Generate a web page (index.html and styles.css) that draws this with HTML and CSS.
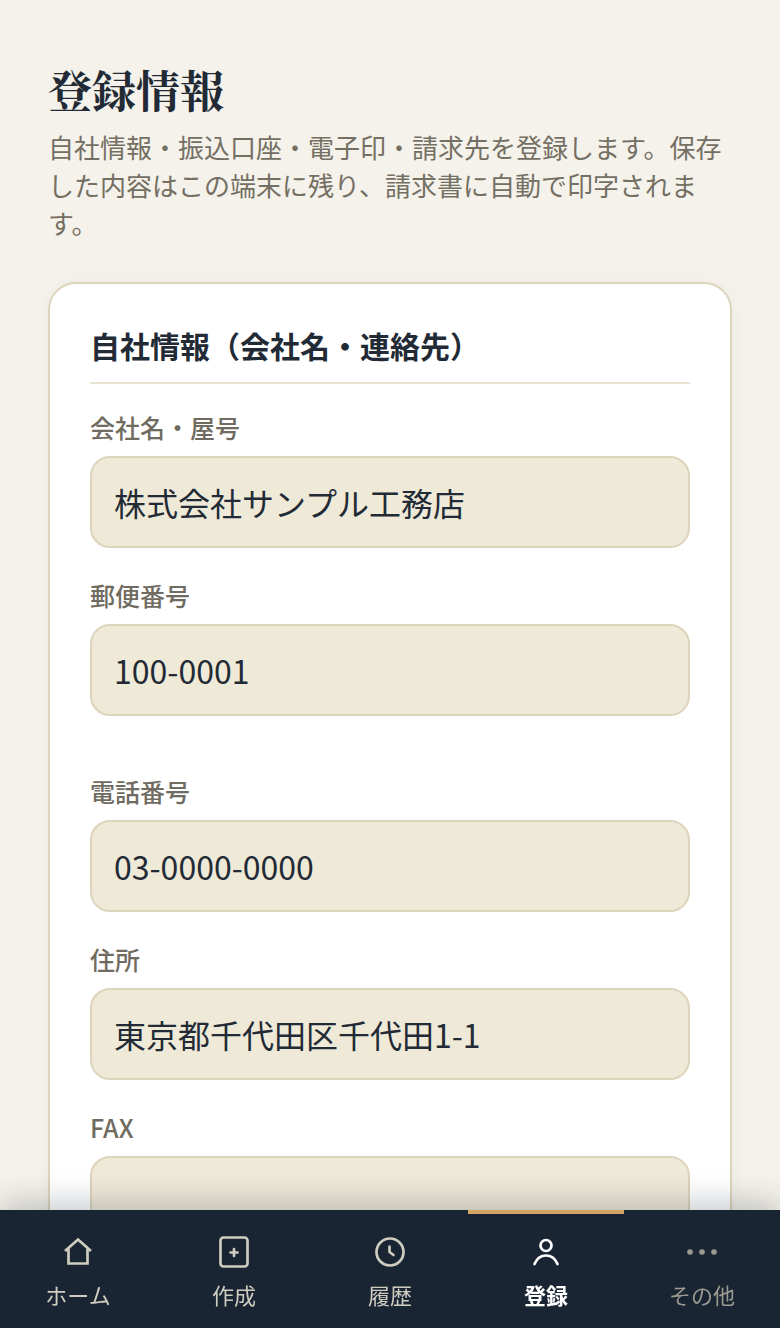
FILE: index.html
```html
<!DOCTYPE html>
<html lang="ja">
<head>
    <meta charset="utf-8">
    <title>登録情報</title>
    <link rel="stylesheet" href="styles.css">
</head>
<body>
<main class="page">
    <h1 class="page-title">登録情報</h1>
    <p class="page-lead">自社情報・振込口座・電子印・請求先を登録します。保存した内容はこの端末に残り、請求書に自動で印字されます。</p>

    <section class="card">
        <h2 class="card-title">自社情報（会社名・連絡先）</h2>
        <div class="field-group">
            <div class="field">
                <label class="field-label">会社名・屋号</label>
                <input class="field-input" type="text" value="株式会社サンプル工務店">
            </div>
            <div class="field">
                <label class="field-label">郵便番号</label>
                <input class="field-input" type="text" value="100-0001">
            </div>
        </div>
        <div class="field-group">
            <div class="field">
                <label class="field-label">電話番号</label>
                <input class="field-input" type="text" value="03-0000-0000">
            </div>
            <div class="field">
                <label class="field-label">住所</label>
                <input class="field-input" type="text" value="東京都千代田区千代田1-1">
            </div>
            <div class="field">
                <label class="field-label">FAX</label>
                <input class="field-input" type="text" value="">
            </div>
        </div>
    </section>
</main>

<nav class="tabbar">
    <a class="tab">
        <svg class="tab-icon tab-icon-sharp" viewBox="0 0 32 32"><path d="M3 15 16 3.500 29 15"/><path d="M6.500 12.500v15h19v-15"/></svg>
        <span>ホーム</span>
    </a>
    <a class="tab">
        <svg class="tab-icon" viewBox="0 0 32 32"><rect x="2.500" y="1.500" width="27" height="29" rx="3"/><path d="M16 13v7M12.500 16.500h7"/></svg>
        <span>作成</span>
    </a>
    <a class="tab">
        <svg class="tab-icon" viewBox="0 0 32 32"><circle cx="16" cy="16" r="13.500"/><path d="M15.500 10.500V16l4 3"/></svg>
        <span>履歴</span>
    </a>
    <a class="tab tab-active">
        <svg class="tab-icon" viewBox="0 0 32 32"><circle cx="16" cy="9.500" r="5.500"/><path d="M4.500 28C7 22 11 19.500 16 19.500S25 22 27.500 28"/></svg>
        <span>登録</span>
    </a>
    <a class="tab tab-more">
        <svg class="tab-icon" viewBox="0 0 32 32"><circle class="dot" cx="4" cy="16" r="2.800"/><circle class="dot" cx="16" cy="16" r="2.800"/><circle class="dot" cx="28" cy="16" r="2.800"/></svg>
        <span>その他</span>
    </a>
</nav>
</body>
</html>
```

FILE: styles.css
```css
* {
    box-sizing: border-box;
}
html, body {
    height: 100%;
}
body {
    margin: 0;
    overflow: hidden;
    background-color: #f5f2eb;
    color: #222b35;
    font-family: "Noto Sans CJK JP", "Noto Sans", sans-serif;
}
.page {
    padding: 58px 48px 0;
}
.page-title {
    margin: 0;
    font-family: "Noto Serif CJK JP", "Liberation Serif", serif;
    font-size: 44px;
    font-weight: 700;
    line-height: 62px;
}
.page-lead {
    margin: 8px 0 40px;
    color: #746f63;
    font-size: 26px;
    line-height: 38px;
}
.card {
    padding: 39px 40px 0;
    background-color: #fff;
    border: 2px solid #ddd4bc;
    border-radius: 28px;
    box-shadow: 0 2px 20px rgba(26, 37, 51, 0.04);
}
.card-title {
    margin: 0;
    padding-bottom: 15px;
    border-bottom: 2px solid #e8e2d0;
    font-size: 30px;
    font-weight: 700;
    line-height: 44px;
}
.field-group {
    display: flex;
    flex-direction: column;
    gap: 29px;
    margin-top: 57px;
}
.card-title + .field-group {
    margin-top: 25px;
}
.field-label {
    display: block;
    margin-bottom: 11px;
    color: #6f6b60;
    font-size: 25px;
    font-weight: 500;
    line-height: 36px;
}
.field-input {
    display: block;
    width: 100%;
    height: 92px;
    padding: 0 22px;
    background-color: #efe9d8;
    border: 2px solid #ddd4bc;
    border-radius: 20px;
    color: #222b35;
    font-family: inherit;
    font-size: 32px;
}

/* bottom tabs */
.tabbar {
    position: fixed;
    left: 0;
    right: 0;
    bottom: 0;
    height: 118px;
    display: flex;
    background-color: #1a2533;
    box-shadow: 0 -8px 28px rgba(26, 37, 51, 0.24);
}
.tab {
    flex: 1;
    display: flex;
    flex-direction: column;
    align-items: center;
    padding-top: 22px;
    border-top: 4px solid transparent;
    color: #cfccc0;
    font-size: 22px;
    font-weight: 400;
    line-height: 32px;
}
.tab-icon {
    width: 32px;
    height: 32px;
    margin-bottom: 10px;
    fill: none;
    stroke: currentColor;
    stroke-width: 2.700;
    stroke-linejoin: round;
    stroke-linecap: round;
}
.tab-icon-sharp {
    stroke-linejoin: miter;
    stroke-linecap: butt;
}
.tab-icon .dot {
    fill: currentColor;
    stroke: none;
}
.tab-active {
    border-top-color: #d4a464;
    color: #fff;
    font-weight: 700;
}
.tab-more {
    color: #9c9b92;
}
```
